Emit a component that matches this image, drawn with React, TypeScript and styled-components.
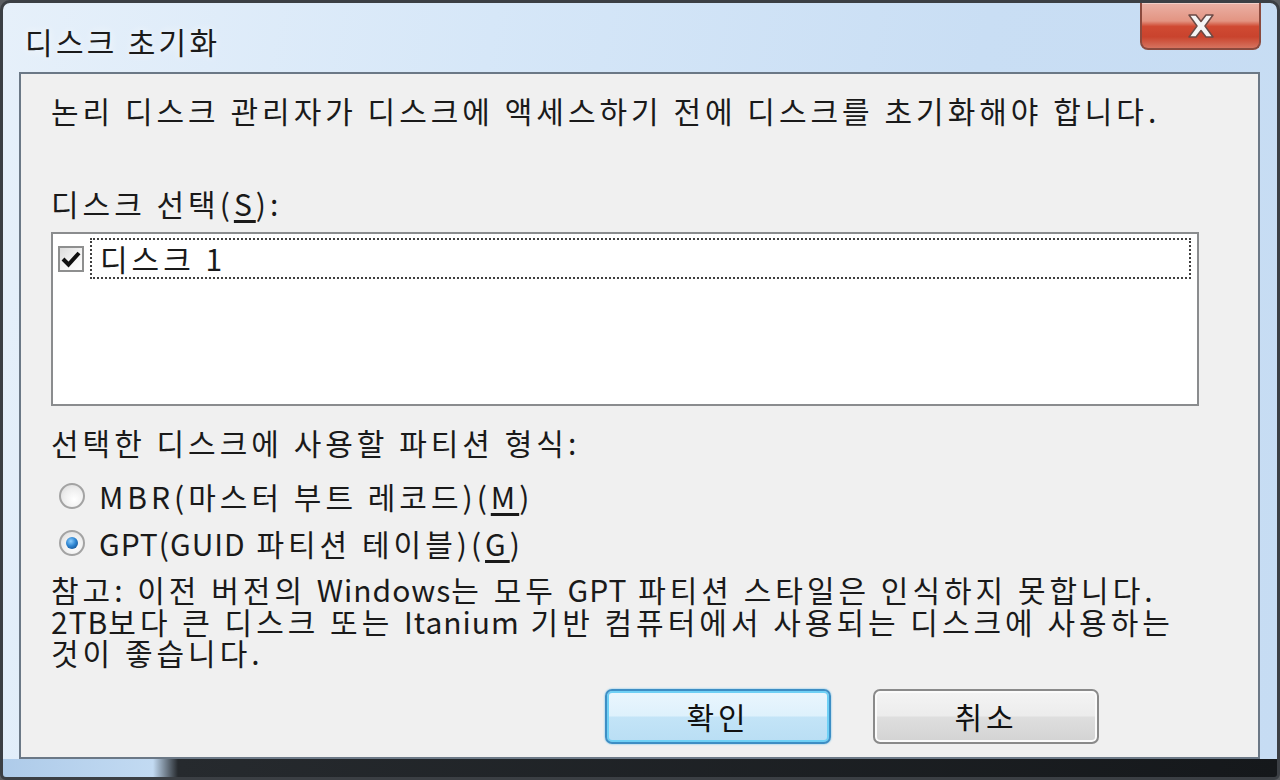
import React from 'react'
import styled, { createGlobalStyle } from 'styled-components'

const GlobalStyle = createGlobalStyle`
	html, body {
		margin: 0;
		padding: 0;
		background: #5a5d61;
	}
	body {
		font-family: "Noto Sans CJK KR", "Noto Sans", sans-serif;
	}
`

const Window = styled.div`
	box-sizing: border-box;
	width: 1280px;
	height: 780px;
	display: flex;
	flex-direction: column;
	border: 3px solid #3b3f44;
	border-radius: 10px 10px 6px 6px;
	padding: 0 17px 18px 16px;
	background:
		linear-gradient(to right, #aecbe9 0, #c2daf2 150px, #262a2e 175px, #15181b 100%) bottom / 100% 18px no-repeat,
		linear-gradient(100deg, #e6f0fa 0%, #d6e7f8 35%, #c9def4 70%, #c6dcf3 100%);
`

const TitleBar = styled.div`
	height: 69px;
	display: flex;
	align-items: flex-start;
	justify-content: space-between;
`

const Title = styled.div`
	font-size: 30px;
	letter-spacing: 3.3px;
	line-height: 31px;
	color: #1b1b1b;
	margin: 23px 0 0 6px;
	text-shadow: 0 0 8px rgba(255, 255, 255, 0.9);
`

const CloseButton = styled.div`
	width: 121px;
	height: 47px;
	margin-right: -1px;
	box-sizing: border-box;
	border: 2px solid #8b4a3e;
	border-top: none;
	border-radius: 0 0 8px 8px;
	display: flex;
	align-items: center;
	justify-content: center;
	background: linear-gradient(180deg, #eab1a5 0%, #e39482 40%, #d04a33 52%, #c9432d 75%, #d6735f 100%);
	box-shadow: inset 0 1px 0 rgba(255, 255, 255, 0.4);
`

const Client = styled.div`
	flex: 1;
	display: flex;
	flex-direction: column;
	box-sizing: border-box;
	background: #f0f0f0;
	border: 2px solid #6b7886;
	padding: 0 59px 0 30px;
	color: #1a1a1a;
	font-size: 30px;
	letter-spacing: 4px;
	line-height: 31px;
`

const Text = styled.div<{ top: number }>`
	margin-top: ${({ top }) => top}px;
	white-space: nowrap;
`

const Latin = styled.span`
	letter-spacing: 1px;
`

const Mnemonic = styled.span`
	text-decoration: underline;
	text-underline-offset: 4px;
`

const ListBox = styled.div`
	margin-top: 13px;
	height: 174px;
	box-sizing: border-box;
	border: 2px solid #8a8c8e;
	background: #fff;
	padding: 4px 6px 0 5px;
`

const ListItem = styled.div`
	display: flex;
	align-items: center;
	gap: 6px;
	height: 41px;
`

const CheckBox = styled.div`
	width: 26px;
	height: 26px;
	box-sizing: border-box;
	border: 2px solid #8e8f8f;
	background: linear-gradient(135deg, #dcdcdc 0%, #f6f6f6 60%, #ffffff 100%);
	display: flex;
	align-items: center;
	justify-content: center;
	flex-shrink: 0;
`

const FocusRect = styled.div`
	flex: 1;
	height: 41px;
	box-sizing: border-box;
	border: 2px dotted #3f3f3f;
	display: flex;
	align-items: center;
	padding-left: 8px;
`

const RadioGroup = styled.div`
	margin-top: 18px;
	display: flex;
	flex-direction: column;
	gap: 7px;
`

const RadioRow = styled.div`
	display: flex;
	align-items: center;
	height: 40px;
	gap: 14px;
	padding-left: 8px;
`

const RadioCircle = styled.div<{ checked: boolean }>`
	width: 26px;
	height: 26px;
	box-sizing: border-box;
	border-radius: 50%;
	border: 2px solid #a3a3a3;
	background: radial-gradient(circle at 60% 65%, #ffffff 0%, #eeeeee 55%, #d6d6d6 100%);
	display: flex;
	align-items: center;
	justify-content: center;
	flex-shrink: 0;
	&::after {
		content: '';
		display: ${({ checked }) => (checked ? 'block' : 'none')};
		width: 12px;
		height: 12px;
		border-radius: 50%;
		background: radial-gradient(circle at 40% 35%, #8fd0ff 0%, #2f86d2 45%, #0d3f7a 100%);
	}
`

const Note = styled.div`
	margin-top: 11px;
	display: flex;
	flex-direction: column;
`

const NoteLine = styled.div`
	height: 31.5px;
	line-height: 31.5px;
	white-space: nowrap;
`

const ButtonRow = styled.div`
	margin-top: 20px;
	margin-right: 100px;
	display: flex;
	justify-content: flex-end;
	gap: 42px;
`

const Button = styled.div<{ primary?: boolean }>`
	width: 226px;
	height: 55px;
	box-sizing: border-box;
	border-radius: 7px;
	display: flex;
	align-items: center;
	justify-content: center;
	font-size: 30px;
	letter-spacing: 4px;
	color: #111;
	border: 2px solid ${({ primary }) => (primary ? '#3d8ec4' : '#8a8a8a')};
	background: ${({ primary }) =>
		primary
			? 'linear-gradient(180deg, #eaf6fd 0%, #def1fc 48%, #c3e4f7 52%, #b9def4 100%)'
			: 'linear-gradient(180deg, #f4f4f4 0%, #ececec 48%, #dedede 52%, #d3d3d3 100%)'};
	box-shadow: ${({ primary }) =>
		primary
			? 'inset 0 0 0 2px #6fd0f5, 0 0 2px #5ab6e6'
			: 'inset 0 0 0 2px #fbfbfb'};
`

export default function App() {
	return (
		<>
			<GlobalStyle />
			<Window>
				<TitleBar>
					<Title>디스크 초기화</Title>
					<CloseButton>
						<svg width="34" height="26" viewBox="0 0 34 26">
							<path
								d="M5 2 L12 2 L17 8.5 L22 2 L29 2 L21 13 L29 24 L22 24 L17 17.5 L12 24 L5 24 L13 13 Z"
								fill="#f4f4f4"
								stroke="#6b4a45"
								strokeWidth="1.5"
								strokeLinejoin="round"
							/>
						</svg>
					</CloseButton>
				</TitleBar>
				<Client>
					<Text top={21}>논리 디스크 관리자가 디스크에 액세스하기 전에 디스크를 초기화해야 합니다.</Text>
					<Text top={62}>디스크 선택(<Mnemonic>S</Mnemonic>):</Text>
					<ListBox>
						<ListItem>
							<CheckBox>
								<svg width="20" height="18" viewBox="0 0 20 18">
									<path d="M2 9 L7.5 14.5 L18 3" fill="none" stroke="#111" strokeWidth="4" />
								</svg>
							</CheckBox>
							<FocusRect>디스크 1</FocusRect>
						</ListItem>
					</ListBox>
					<Text top={21}>선택한 디스크에 사용할 파티션 형식:</Text>
					<RadioGroup>
						<RadioRow>
							<RadioCircle checked={false} />
							<span>MBR(마스터 부트 레코드)(<Mnemonic>M</Mnemonic>)</span>
						</RadioRow>
						<RadioRow>
							<RadioCircle checked />
							<span><Latin>GPT(GUID</Latin> 파티션 테이블)(<Mnemonic>G</Mnemonic>)</span>
						</RadioRow>
					</RadioGroup>
					<Note>
						<NoteLine>참고: 이전 버전의 <Latin>Windows</Latin>는 모두 <Latin>GPT</Latin> 파티션 스타일은 인식하지 못합니다.</NoteLine>
						<NoteLine><Latin>2TB</Latin>보다 큰 디스크 또는 <Latin>Itanium</Latin> 기반 컴퓨터에서 사용되는 디스크에 사용하는</NoteLine>
						<NoteLine>것이 좋습니다.</NoteLine>
					</Note>
					<ButtonRow>
						<Button primary>확인</Button>
						<Button>취소</Button>
					</ButtonRow>
				</Client>
			</Window>
		</>
	)
}
